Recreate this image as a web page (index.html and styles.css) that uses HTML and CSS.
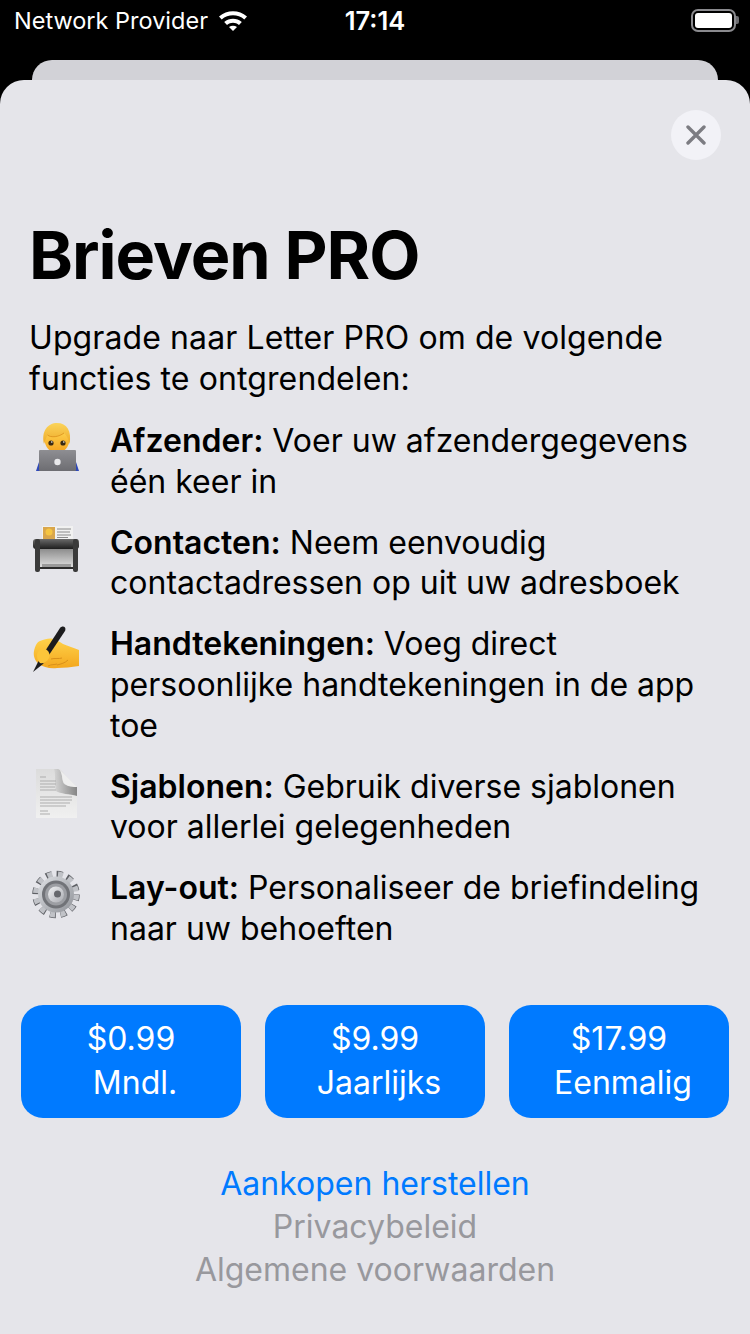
FILE: index.html
```html
<!DOCTYPE html>
<html lang="nl">
<head>
    <meta charset="UTF-8">
    <meta name="viewport" content="width=device-width, initial-scale=1.0">
    <title>Brieven PRO</title>
    <link rel="stylesheet" href="styles.css">
</head>
<body>
    <header class="status-bar">
        <div class="status-left">
            <span>Network Provider</span>
            <svg class="wifi" width="30" height="22" viewBox="0 0 30 22">
                <path d="M1 7.5C9 0.5 21 0.5 29 7.5L26.3 10.4C19.8 4.8 10.2 4.8 3.7 10.4Z" fill="#fff"/>
                <path d="M6.2 13C11.4 8.6 18.6 8.6 23.8 13L21 16C17.4 13 12.6 13 9 16Z" fill="#fff"/>
                <path d="M11 18C13.4 16.2 16.6 16.2 19 18L15 22Z" fill="#fff"/>
            </svg>
        </div>
        <div class="status-time">17:14</div>
        <div class="status-right">
            <div class="battery"><div class="battery-fill"></div></div>
            <div class="battery-nub"></div>
        </div>
    </header>

    <div class="back-sheet"></div>

    <main class="sheet">
        <div class="close-row">
            <button class="close-btn" type="button">
                <svg width="20" height="20" viewBox="0 0 20 20">
                    <path d="M2 2L18 18M18 2L2 18" stroke="#7c7c82" stroke-width="3.4" stroke-linecap="round"/>
                </svg>
            </button>
        </div>

        <h1>Brieven PRO</h1>
        <p class="intro">Upgrade naar Letter PRO om de volgende functies te ontgrendelen:</p>

        <ul class="features">
            <li>
                <svg class="feature-icon" width="48" height="48" viewBox="0 0 48 48">
                    <defs>
                        <linearGradient id="skin" x1="0" y1="0" x2="0" y2="1">
                            <stop offset="0" stop-color="#ffdf5c"/>
                            <stop offset="1" stop-color="#f5a11d"/>
                        </linearGradient>
                        <linearGradient id="hair" x1="0" y1="0" x2="0" y2="1">
                            <stop offset="0" stop-color="#fbd45a"/>
                            <stop offset="1" stop-color="#eea928"/>
                        </linearGradient>
                        <linearGradient id="lid" x1="0" y1="0" x2="0" y2="1">
                            <stop offset="0" stop-color="#8e8e92"/>
                            <stop offset="1" stop-color="#6d6d72"/>
                        </linearGradient>
                    </defs>
                    <path d="M4 48L8 36H43L47 48Z" fill="#2f49b8"/>
                    <ellipse cx="25" cy="16" rx="12.500" ry="14" fill="url(#skin)"/>
                    <path d="M12 21C9 8 16 0 25 0C35 0 40 8 37.500 21C36.500 16 35 13 32 10C27 14 19 15 15.500 12C14 15 13 18 12 21Z" fill="url(#hair)"/>
                    <path d="M15.500 12C19 15 27 14 32 10" fill="none" stroke="#d98f1c" stroke-width="0.800"/>
                    <circle cx="19" cy="20" r="2.600" fill="#3a2a14"/>
                    <circle cx="31" cy="20" r="2.600" fill="#3a2a14"/>
                    <circle cx="19.800" cy="19" r="0.800" fill="#fff"/>
                    <circle cx="31.800" cy="19" r="0.800" fill="#fff"/>
                    <rect x="7" y="27" width="37" height="21" rx="1" fill="url(#lid)"/>
                    <circle cx="25.500" cy="39" r="3.200" fill="#e8e8ea"/>
                </svg>
                <div class="feature-text"><b>Afzender:</b> Voer uw afzendergegevens één keer in</div>
            </li>
            <li>
                <svg class="feature-icon" width="48" height="48" viewBox="0 0 48 48">
                    <defs>
                        <linearGradient id="tray" x1="0" y1="0" x2="0" y2="1">
                            <stop offset="0" stop-color="#8d8d8d"/>
                            <stop offset="1" stop-color="#e2e2e2"/>
                        </linearGradient>
                        <linearGradient id="roller" x1="0" y1="0" x2="0" y2="1">
                            <stop offset="0" stop-color="#6a6a6a"/>
                            <stop offset="1" stop-color="#1e1e1e"/>
                        </linearGradient>
                    </defs>
                    <rect x="10" y="1" width="31" height="15" fill="#f1f1f1"/>
                    <rect x="11" y="2" width="12" height="12" fill="#d9a64c"/>
                    <circle cx="17" cy="7" r="3.500" fill="#f5c542"/>
                    <path d="M25 4H39M25 7H38M25 10H39M25 12.500H36" stroke="#8a8a8a" stroke-width="1"/>
                    <rect x="8" y="24" width="33" height="19" fill="url(#tray)"/>
                    <rect x="10" y="39" width="29" height="4" fill="#9a9a9a"/>
                    <rect x="1" y="14" width="46" height="10" rx="3" fill="url(#roller)"/>
                    <rect x="3" y="14" width="5" height="33" rx="2" fill="#3a3a3a"/>
                    <rect x="41" y="14" width="5" height="33" rx="2" fill="#3a3a3a"/>
                    <path d="M8 43H41" stroke="#2c2c2c" stroke-width="2"/>
                </svg>
                <div class="feature-text"><b>Contacten:</b> Neem eenvoudig contactadressen op uit uw adresboek</div>
            </li>
            <li>
                <svg class="feature-icon" width="48" height="48" viewBox="0 0 48 48">
                    <defs>
                        <linearGradient id="hand" x1="0" y1="0" x2="0" y2="1">
                            <stop offset="0" stop-color="#ffd24a"/>
                            <stop offset="1" stop-color="#f3a71e"/>
                        </linearGradient>
                    </defs>
                    <path d="M47 24V40C39 41 32 42 25 42C18 43 11 41 7 38C3 35 1 30 2 25C3 20 5 16 8 15C13 13 18 12 21 13C25 14 28 16 31 18C36 20 42 22 47 24Z" fill="url(#hand)"/>
                    <path d="M1 46L6 36L28 2C29.500 0 32 0 33 1.500C33.500 2.500 33.500 4 33 5L11 38Z" fill="#1c1c1e"/>
                    <path d="M5 30C5 25 9 22 13 23C16 24 19 28 17 32C15 36 11 38 8 37C6 35 5 33 5 30Z" fill="#fcc53a"/>
                    <path d="M16 40C20 38 22 39 25 38M19 33C23 32 27 33 30 32M25 39C29 38 33 37 36 34" stroke="#d9901a" stroke-width="1" fill="none"/>
                </svg>
                <div class="feature-text"><b>Handtekeningen:</b> Voeg direct persoonlijke handtekeningen in de app toe</div>
            </li>
            <li>
                <svg class="feature-icon" width="48" height="50" viewBox="0 0 48 50">
                    <defs>
                        <linearGradient id="page" x1="0" y1="0" x2="0" y2="1">
                            <stop offset="0" stop-color="#dcdcdc"/>
                            <stop offset="1" stop-color="#f0f0f0"/>
                        </linearGradient>
                        <linearGradient id="fold" x1="0" y1="0" x2="1" y2="0">
                            <stop offset="0" stop-color="#d0d0d0"/>
                            <stop offset="1" stop-color="#5c5c5c"/>
                        </linearGradient>
                    </defs>
                    <path d="M4 0H26C29 0 31 3 33 6L45 18V49H4Z" fill="url(#page)"/>
                    <path d="M22 0H26C30 1 30 8 31 13C32 17 38 17 45 18V27C38 25 28 25 24 22C22 15 24 6 22 0Z" fill="url(#fold)" opacity="0.7"/>
                    <path d="M27 0L45 18C39 18 33 17 31 12C30 8 30 3 27 0Z" fill="#eeeeee"/>
                    <path d="M8 8H14M8 12H24M8 15H24M8 18H23M8 21H24M8 28H40M8 31H40M8 34H38M8 37H34M8 42H16M8 45H18" stroke="#adadad" stroke-width="1"/>
                </svg>
                <div class="feature-text"><b>Sjablonen:</b> Gebruik diverse sjablonen voor allerlei gelegenheden</div>
            </li>
            <li>
                <svg class="feature-icon" width="48" height="50" viewBox="0 0 48 50">
                    <defs>
                        <linearGradient id="steel" x1="0" y1="0" x2="1" y2="1">
                            <stop offset="0" stop-color="#dfe1e5"/>
                            <stop offset="1" stop-color="#8f9298"/>
                        </linearGradient>
                        <linearGradient id="ring" x1="0" y1="0" x2="1" y2="1">
                            <stop offset="0" stop-color="#f1f2f4"/>
                            <stop offset="1" stop-color="#a9abb1"/>
                        </linearGradient>
                    </defs>
                    <circle cx="24" cy="24.500" r="20" fill="none" stroke="#5f6166" stroke-width="7.500" stroke-dasharray="5.800 4.670"/>
                    <circle cx="24" cy="24.500" r="19.800" fill="none" stroke="#c0c2c7" stroke-width="6.500" stroke-dasharray="4.800 5.670" stroke-dashoffset="-0.500"/>
                    <circle cx="24" cy="24.500" r="18" fill="url(#steel)"/>
                    <circle cx="24" cy="24.500" r="14" fill="#717378"/>
                    <circle cx="24" cy="24.500" r="11" fill="#9c9ea3"/>
                    <circle cx="24" cy="24.500" r="8" fill="url(#ring)"/>
                    <circle cx="25.500" cy="24" r="3.500" fill="#66686d"/>
                </svg>
                <div class="feature-text"><b>Lay-out:</b> Personaliseer de briefindeling naar uw behoeften</div>
            </li>
        </ul>

        <div class="plans">
            <button class="plan" type="button"><span>$0.99</span><span class="plan-name">Mndl.</span></button>
            <button class="plan" type="button"><span>$9.99</span><span class="plan-name">Jaarlijks</span></button>
            <button class="plan" type="button"><span>$17.99</span><span class="plan-name">Eenmalig</span></button>
        </div>

        <div class="links">
            <a class="link-blue" href="#">Aankopen herstellen</a>
            <a href="#">Privacybeleid</a>
            <a href="#">Algemene voorwaarden</a>
        </div>
    </main>
</body>
</html>
```

FILE: styles.css
```css
* {
    margin: 0;
    padding: 0;
    box-sizing: border-box;
}

html, body {
    height: 100%;
}

body {
    font-family: Inter, "Liberation Sans", sans-serif;
    background-color: #000;
    color: #000;
    overflow: hidden;
}

.status-bar {
    height: 40px;
    display: grid;
    grid-template-columns: 1fr auto 1fr;
    align-items: center;
    padding: 0 11px;
    color: #fff;
    font-size: 23.5px;
}

.status-left {
    display: flex;
    align-items: center;
    gap: 10px;
    margin-left: 3px;
}

.status-time {
    font-weight: 600;
    font-size: 25.5px;
}

.status-right {
    display: flex;
    justify-content: flex-end;
    align-items: center;
}

.battery {
    width: 45px;
    height: 23px;
    border: 2px solid #8a8a8e;
    border-radius: 7px;
    padding: 2px;
}

.battery-fill {
    height: 100%;
    background-color: #fff;
    border-radius: 3px;
}

.battery-nub {
    width: 3px;
    height: 8px;
    background-color: #6c6c70;
    border-radius: 0 2px 2px 0;
}

.back-sheet {
    height: 20px;
    margin: 20px 32px 0;
    background-color: #d2d2d7;
    border-radius: 20px 20px 0 0;
}

.sheet {
    height: 1254px;
    background-color: #e5e5ea;
    border-radius: 24px 24px 0 0;
    padding: 30px 29px 0;
}

.close-row {
    display: flex;
    justify-content: flex-end;
}

.close-btn {
    width: 50px;
    height: 50px;
    border: none;
    border-radius: 50%;
    background-color: #f2f2f7;
    display: flex;
    align-items: center;
    justify-content: center;
}

h1 {
    font-size: 66.5px;
    font-weight: 700;
    line-height: 82px;
    margin-top: 54px;
    letter-spacing: -1px;
}

.intro {
    font-size: 32px;
    line-height: 41px;
    margin-top: 21px;
    letter-spacing: 0.1px;
}

.features {
    list-style: none;
    margin-top: 22px;
    display: flex;
    flex-direction: column;
    gap: 20px;
}

.features li {
    display: grid;
    grid-template-columns: 81px 1fr;
    align-items: start;
}

.feature-icon {
    margin: 2px 0 0 3px;
    filter: blur(0.4px);
}

.feature-text {
    font-size: 32px;
    line-height: 40.8px;
}

.feature-text b {
    font-weight: 600;
}

.plans {
    display: flex;
    gap: 24px;
    margin: 55px -8px 0;
}

.plan {
    width: 220px;
    height: 113px;
    border: none;
    border-radius: 22px;
    background-color: #007aff;
    color: #fff;
    font-family: inherit;
    font-size: 32px;
    line-height: 44px;
    display: flex;
    flex-direction: column;
    align-items: center;
    justify-content: center;
}

.plan-name {
    padding-left: 8px;
}

.links {
    margin-top: 44px;
    display: flex;
    flex-direction: column;
    align-items: center;
    font-size: 32px;
    line-height: 43px;
}

.links a {
    color: #98989d;
    text-decoration: none;
}

.links .link-blue {
    color: #007aff;
}
```
